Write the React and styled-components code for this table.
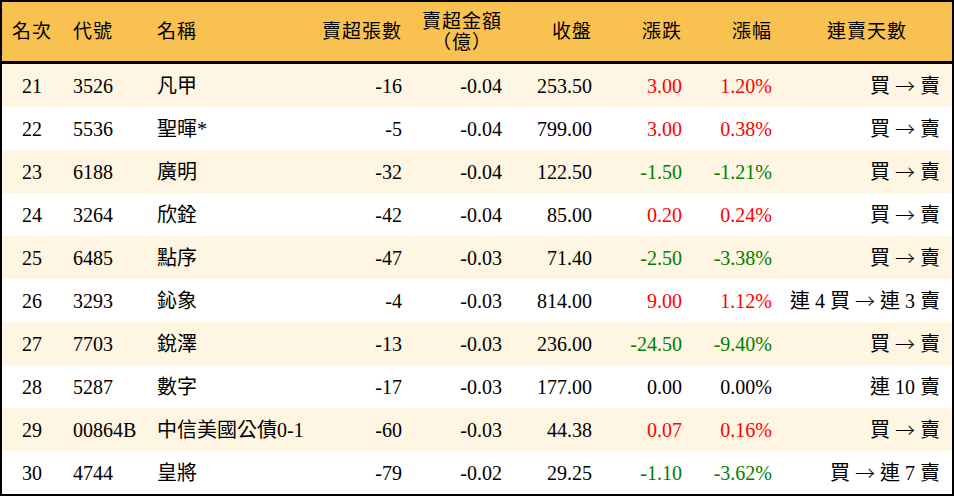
import styled, { createGlobalStyle } from "styled-components";

const GlobalStyle = createGlobalStyle`
  html, body {
    margin: 0;
    padding: 0;
    background: #ffffff;
  }
  body {
    font-family: "Liberation Serif", "Noto Sans CJK TC", serif;
  }
`;

const COLS = "60px 85px 173px 92px 100px 90px 90px 90px 170px";

const rows = [
  { rank: 21, code: "3526", name: "凡甲", lots: -16, amt: "-0.04", close: "253.50", chg: "3.00", pct: "1.20%", from: "買", to: "賣" },
  { rank: 22, code: "5536", name: "聖暉*", lots: -5, amt: "-0.04", close: "799.00", chg: "3.00", pct: "0.38%", from: "買", to: "賣" },
  { rank: 23, code: "6188", name: "廣明", lots: -32, amt: "-0.04", close: "122.50", chg: "-1.50", pct: "-1.21%", from: "買", to: "賣" },
  { rank: 24, code: "3264", name: "欣銓", lots: -42, amt: "-0.04", close: "85.00", chg: "0.20", pct: "0.24%", from: "買", to: "賣" },
  { rank: 25, code: "6485", name: "點序", lots: -47, amt: "-0.03", close: "71.40", chg: "-2.50", pct: "-3.38%", from: "買", to: "賣" },
  { rank: 26, code: "3293", name: "鈊象", lots: -4, amt: "-0.03", close: "814.00", chg: "9.00", pct: "1.12%", from: "連 4 買", to: "連 3 賣" },
  { rank: 27, code: "7703", name: "銳澤", lots: -13, amt: "-0.03", close: "236.00", chg: "-24.50", pct: "-9.40%", from: "買", to: "賣" },
  { rank: 28, code: "5287", name: "數字", lots: -17, amt: "-0.03", close: "177.00", chg: "0.00", pct: "0.00%", from: null, to: "連 10 賣" },
  { rank: 29, code: "00864B", name: "中信美國公債0-1", lots: -60, amt: "-0.03", close: "44.38", chg: "0.07", pct: "0.16%", from: "買", to: "賣" },
  { rank: 30, code: "4744", name: "皇將", lots: -79, amt: "-0.02", close: "29.25", chg: "-1.10", pct: "-3.62%", from: "買", to: "連 7 賣" },
];

function tone(v) {
  const n = parseFloat(v);
  if (n > 0) return "up";
  if (n < 0) return "down";
  return "flat";
}

export default function App() {
  return (
    <>
      <GlobalStyle />
      <Table>
        <Head>
          <HCell $align="center">名次</HCell>
          <HCell $align="left" $pl={11}>代號</HCell>
          <HCell $align="left" $pl={10}>名稱</HCell>
          <HCell $align="right">賣超張數</HCell>
          <HCell $align="right">
            <Stack>
              賣超金額
              <br />
              （億）
            </Stack>
          </HCell>
          <HCell $align="right">收盤</HCell>
          <HCell $align="right">漲跌</HCell>
          <HCell $align="right">漲幅</HCell>
          <HCell $align="center">連賣天數</HCell>
        </Head>

        {rows.map((r, i) => (
          <Row key={r.rank} $alt={i % 2 === 0}>
            <Cell $align="center">{r.rank}</Cell>
            <Cell $align="left" $pl={11}>{r.code}</Cell>
            <Cell $align="left" $pl={10}>{r.name}</Cell>
            <Cell $align="right">{r.lots}</Cell>
            <Cell $align="right">{r.amt}</Cell>
            <Cell $align="right">{r.close}</Cell>
            <Cell $align="right" $tone={tone(r.chg)}>{r.chg}</Cell>
            <Cell $align="right" $tone={tone(r.pct)}>{r.pct}</Cell>
            <Cell $align="right" $pr={12}>
              {r.from && (
                <>
                  {r.from}
                  <Arrow>→</Arrow>
                </>
              )}
              {r.to}
            </Cell>
          </Row>
        ))}
      </Table>
    </>
  );
}

const Table = styled.div`
  width: 954px;
  height: 496px;
  box-sizing: border-box;
  border: 2px solid #000;
  font-size: 20px;
  color: #000;
  overflow: hidden;
`;

const Head = styled.div`
  display: grid;
  grid-template-columns: ${COLS};
  height: 59px;
  background: #f8c150;
  border-bottom: 3px solid #000;
`;

const Row = styled.div`
  display: grid;
  grid-template-columns: ${COLS};
  height: 43px;
  background: ${({ $alt }) => ($alt ? "#fef5e2" : "#ffffff")};
`;

const toneColor = {
  up: "#ff0000",
  down: "#008000",
  flat: "#000000",
};

const Cell = styled.div`
  display: flex;
  align-items: center;
  justify-content: ${({ $align }) =>
    $align === "center" ? "center" : $align === "right" ? "flex-end" : "flex-start"};
  padding-left: ${({ $pl }) => $pl || 0}px;
  padding-right: ${({ $align, $pr }) => ($pr ? $pr : $align === "right" ? 10 : 0)}px;
  white-space: pre;
  line-height: 1;
  color: ${({ $tone }) => toneColor[$tone] || "#000"};
`;

const HCell = styled(Cell)`
  font-size: 19px;
  letter-spacing: 1px;
`;

const Stack = styled.div`
  text-align: center;
  line-height: 21px;
`;

const Arrow = styled.span`
  font-family: "Noto Sans CJK TC", sans-serif;
  font-size: 20px;
  font-weight: 300;
  margin: 0 5px;
`;
